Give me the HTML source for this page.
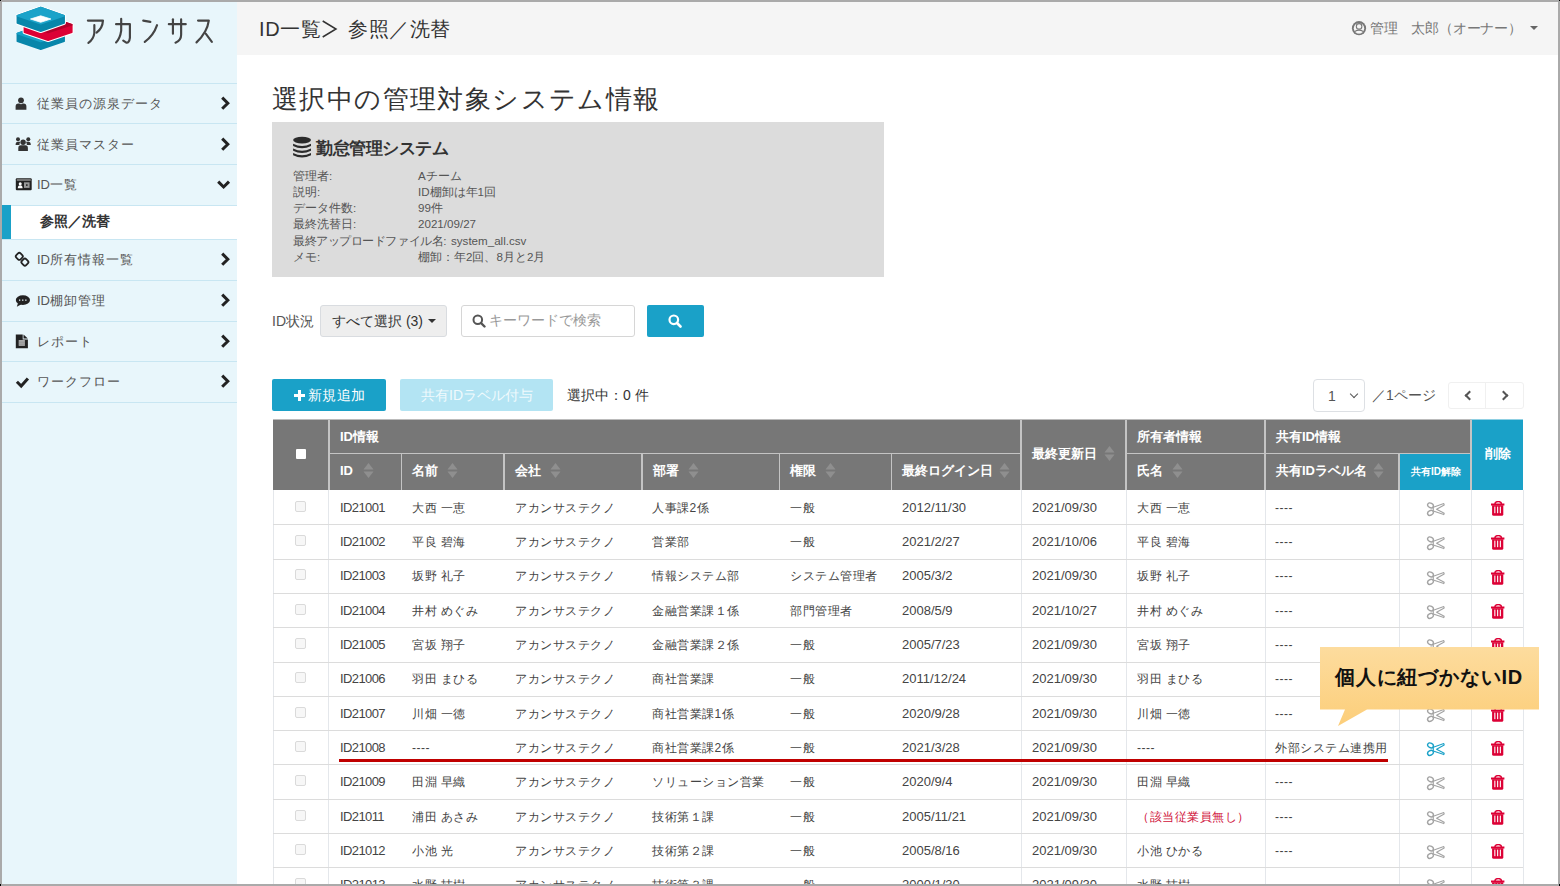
<!DOCTYPE html><html><head><meta charset="utf-8"><style>
*{box-sizing:border-box;margin:0;padding:0}
html,body{width:1560px;height:886px;overflow:hidden;background:#fff}
body{position:relative;font-family:"Liberation Sans", sans-serif;color:#555}
.a{position:absolute;white-space:nowrap}
.sb{left:2px;top:2px;width:235px;height:884px;background:#e8f6fb}
.hd{left:237px;top:2px;width:1321px;height:52.5px;background:#f5f5f5}
.mi{left:2px;width:235px;border-top:1px solid #c8e6f2}
.mt{font-size:13px;letter-spacing:1px;color:#555;line-height:16px}
.chev{width:8px;height:8px;border-right:2.6px solid #333;border-bottom:2.6px solid #333}
.box{left:272px;top:122px;width:612px;height:155px;background:#dcdcdc}
.it{font-size:11.6px;color:#555;line-height:14px}
.th{background:#777;color:#fff;font-weight:bold;font-size:13px}
.td{font-size:13px;color:#444;line-height:16px}
.hl{height:1px;background:#e0e0e0}
.vl{width:1px;background:#e6e9ee}
</style></head><body>
<div class="a sb"></div>
<div class="a hd"></div>
<svg class="a" style="left:12px;top:4px" width="66" height="50" viewBox="0 0 66 50"><path d="M28.75 21.6 L52.15 29.6 L52.15 37.2 L28.75 45.2 L5.350000000000001 37.2 L5.350000000000001 29.6 Z" fill="#0886aa" stroke="#e8f6fb" stroke-width="3.6" stroke-linejoin="round"/><path d="M28.75 21.6 L52.15 29.6 L52.15 37.2 L28.75 45.2 L5.350000000000001 37.2 L5.350000000000001 29.6 Z" fill="#0886aa" stroke="#0886aa" stroke-width="1.6" stroke-linejoin="round"/><path d="M28.75 21.6 L52.15 29.6 L28.75 37.6 L5.350000000000001 29.6 Z" fill="#17a0c6" stroke="#17a0c6" stroke-width="1.6" stroke-linejoin="round"/><path d="M36.1 12.8 L59.8 20.700000000000003 L59.8 28.300000000000004 L36.1 36.2 L12.400000000000002 28.300000000000004 L12.400000000000002 20.700000000000003 Z" fill="#dc0035" stroke="#ffffff" stroke-width="3.6" stroke-linejoin="round"/><path d="M36.1 12.8 L59.8 20.700000000000003 L59.8 28.300000000000004 L36.1 36.2 L12.400000000000002 28.300000000000004 L12.400000000000002 20.700000000000003 Z" fill="#dc0035" stroke="#dc0035" stroke-width="1.6" stroke-linejoin="round"/><path d="M36.1 12.8 L59.8 20.700000000000003 L36.1 28.6 L12.400000000000002 20.700000000000003 Z" fill="#b3002b" stroke="#b3002b" stroke-width="1.6" stroke-linejoin="round"/><path d="M28.75 3.6 L52.15 11.7 L52.15 19.1 L28.75 27.200000000000003 L5.350000000000001 19.1 L5.350000000000001 11.7 Z" fill="#0886aa" stroke="#ffffff" stroke-width="3.6" stroke-linejoin="round"/><path d="M28.75 3.6 L52.15 11.7 L52.15 19.1 L28.75 27.200000000000003 L5.350000000000001 19.1 L5.350000000000001 11.7 Z" fill="#0886aa" stroke="#0886aa" stroke-width="1.6" stroke-linejoin="round"/><path d="M28.75 3.6 L52.15 11.7 L28.75 19.8 L5.350000000000001 11.7 Z" fill="#1ba3c9" stroke="#1ba3c9" stroke-width="1.6" stroke-linejoin="round"/><path d="M18.5 15 L28.7 11.8 L38.9 15 L28.7 18.3 Z" fill="#ffffff" stroke="#fff" stroke-width="0.8" stroke-linejoin="round"/></svg>
<svg class="a" style="left:75px;top:5px" width="160" height="50" viewBox="0 0 1560 488"><g fill="none" stroke="#444" stroke-width="21" stroke-linecap="round" stroke-linejoin="round"><path d="M125 152 L272 152 Q268 225 210 270"/><path d="M188 195 L188 275 Q180 335 130 370"/><path d="M400 187 L535 187 L535 320 Q528 372 500 368 L470 348"/><path d="M450 135 L450 250 Q440 325 400 365"/><path d="M665 152 L735 165"/><path d="M800 197 Q765 300 680 360"/><path d="M915 187 L1080 187"/><path d="M955 140 L955 280"/><path d="M1035 140 L1035 290 Q1035 345 980 368"/><path d="M1200 152 L1305 152 Q1290 265 1185 365"/><path d="M1275 280 L1335 360"/></g></svg>
<div class="a" style="left:259px;top:17px;font-size:20px;letter-spacing:0.6px;line-height:24px;color:#333">ID一覧</div>
<svg class="a" style="left:320px;top:18px" width="20" height="22" viewBox="0 0 20 22"><path d="M2.7 3 L16 11 L2.7 19" fill="none" stroke="#333" stroke-width="1.5"/></svg>
<div class="a" style="left:348px;top:17px;font-size:20px;letter-spacing:0.6px;line-height:24px;color:#333">参照／洗替</div>
<svg class="a" style="left:1351px;top:20px" width="16" height="16" viewBox="0 0 16 16">
<defs><clipPath id="uc"><circle cx="8" cy="8.2" r="5.3"/></clipPath></defs>
<circle cx="8" cy="8.2" r="7.1" fill="#777"/>
<circle cx="8" cy="8.2" r="5.2" fill="#f5f5f5"/>
<g clip-path="url(#uc)"><ellipse cx="8" cy="14" rx="5.6" ry="4.6" fill="#777"/><ellipse cx="8" cy="14.4" rx="4.4" ry="3.6" fill="#f5f5f5"/></g>
<circle cx="8.1" cy="6.4" r="3.3" fill="#777"/>
<circle cx="8.1" cy="6.4" r="2.2" fill="#f5f5f5"/>
</svg>
<div class="a" style="left:1370px;top:20px;font-size:14px;letter-spacing:-0.2px;line-height:16px;color:#777">管理　太郎（オーナー）</div>
<div class="a" style="left:1530px;top:26px;width:0;height:0;border-left:4px solid transparent;border-right:4px solid transparent;border-top:4px solid #666"></div>
<div class="a mi" style="top:82.5px;height:40.5px"></div>
<div class="a mt" style="left:37px;top:95.8px">従業員の源泉データ</div>
<svg class="a" style="left:215px;top:92.8px" width="20" height="20" viewBox="0 0 20 20"><path d="M7.2 4.6 L12.8 10.2 L7.2 15.8" fill="none" stroke="#222" stroke-width="3"/></svg>
<div class="a mi" style="top:123px;height:41px"></div>
<div class="a mt" style="left:37px;top:136.6px">従業員マスター</div>
<svg class="a" style="left:215px;top:133.5px" width="20" height="20" viewBox="0 0 20 20"><path d="M7.2 4.6 L12.8 10.2 L7.2 15.8" fill="none" stroke="#222" stroke-width="3"/></svg>
<div class="a mi" style="top:164px;height:40.5px"></div>
<div class="a mt" style="left:37px;top:177.3px"><span style="letter-spacing:0">ID</span>一覧</div>
<svg class="a" style="left:213px;top:174.2px" width="20" height="20" viewBox="0 0 20 20"><path d="M5.2 7.6 L10.6 13 L16 7.6" fill="none" stroke="#222" stroke-width="3"/></svg>
<div class="a" style="left:2px;top:204.5px;width:235px;height:34.5px;background:#fff;border-top:1px solid #c8e6f2"></div>
<div class="a" style="left:2px;top:205px;width:9px;height:34px;background:#1aa1c8"></div>
<div class="a" style="left:40px;top:213px;font-size:14px;line-height:16px;font-weight:bold;color:#333">参照／洗替</div>
<div class="a mi" style="top:239px;height:40.5px"></div>
<div class="a mt" style="left:37px;top:252.3px"><span style="letter-spacing:0">ID</span>所有情報一覧</div>
<svg class="a" style="left:215px;top:249.2px" width="20" height="20" viewBox="0 0 20 20"><path d="M7.2 4.6 L12.8 10.2 L7.2 15.8" fill="none" stroke="#222" stroke-width="3"/></svg>
<div class="a mi" style="top:279.5px;height:41px"></div>
<div class="a mt" style="left:37px;top:293.1px"><span style="letter-spacing:0">ID</span>棚卸管理</div>
<svg class="a" style="left:215px;top:290.0px" width="20" height="20" viewBox="0 0 20 20"><path d="M7.2 4.6 L12.8 10.2 L7.2 15.8" fill="none" stroke="#222" stroke-width="3"/></svg>
<div class="a mi" style="top:320.5px;height:40.5px"></div>
<div class="a mt" style="left:37px;top:333.9px">レポート</div>
<svg class="a" style="left:215px;top:330.8px" width="20" height="20" viewBox="0 0 20 20"><path d="M7.2 4.6 L12.8 10.2 L7.2 15.8" fill="none" stroke="#222" stroke-width="3"/></svg>
<div class="a mi" style="top:361px;height:40.5px"></div>
<div class="a mt" style="left:37px;top:374.4px">ワークフロー</div>
<svg class="a" style="left:215px;top:371.2px" width="20" height="20" viewBox="0 0 20 20"><path d="M7.2 4.6 L12.8 10.2 L7.2 15.8" fill="none" stroke="#222" stroke-width="3"/></svg>
<div class="a mi" style="top:401.5px;height:1px"></div>
<svg class="a" style="left:0;top:0" width="40" height="400" viewBox="0 0 40 400"><circle cx="21" cy="100.3" r="2.9" fill="#333"/><path d="M15.6 109.7 L15.6 106.5 Q15.6 103.6 18.4 103.6 L19.5 103.6 Q21 104.8 22.5 103.6 L23.6 103.6 Q26.4 103.6 26.4 106.5 L26.4 109.7 Z" fill="#333"/><circle cx="18" cy="139.2" r="2" fill="#333"/><circle cx="28.3" cy="139.2" r="2" fill="#333"/><circle cx="23.1" cy="142.3" r="2.7" fill="#333"/><path d="M15.6 145 Q15.6 141.8 18 141.8 L20.3 141.8 Q19.3 143.5 19.5 145 Z M30.8 145 Q30.8 141.8 28.4 141.8 L26 141.8 Q27 143.5 26.8 145 Z" fill="#333"/><path d="M18.3 151 L18.3 148 Q18.3 145.3 20.8 145.3 L25.4 145.3 Q27.9 145.3 27.9 148 L27.9 151 Z" fill="#333"/><rect x="15.8" y="178.3" width="15.9" height="11.9" rx="1" fill="#222"/><rect x="16.8" y="179.2" width="13.9" height="1.6" fill="#888"/><path d="M17.8 188.2 Q17.8 185.3 20.2 185.3 Q22.6 185.3 22.6 188.2 Z" fill="#fff"/><circle cx="20.2" cy="183.8" r="1.5" fill="#fff"/><rect x="24" y="182.3" width="5.6" height="5.6" fill="#999"/><rect x="26" y="184.2" width="1.6" height="1.8" fill="#333"/><g fill="none" stroke="#222" stroke-width="1.8"><rect x="16.3" y="253.3" width="6" height="6" rx="1.8" transform="rotate(45 19.3 256.3)"/><rect x="21.9" y="259.1" width="6" height="6" rx="1.8" transform="rotate(45 24.9 262.1)"/></g><ellipse cx="22.9" cy="300.1" rx="7.1" ry="4.9" fill="#222"/><path d="M18 303 L16.8 306.8 L21.5 304.2 Z" fill="#222"/><rect x="19" y="299.5" width="1.3" height="1.3" fill="#e8f6fb"/><rect x="22.1" y="299.5" width="1.3" height="1.3" fill="#e8f6fb"/><rect x="25.2" y="299.5" width="1.3" height="1.3" fill="#e8f6fb"/><path d="M15.8 334.4 L22.7 334.4 L22.7 339.4 L27.9 339.4 L27.9 348.2 L15.8 348.2 Z" fill="#222"/><path d="M23.5 334.6 L27.8 338.6 L23.5 338.6 Z" fill="#222"/><rect x="18.7" y="340" width="6.2" height="5.9" fill="#aaa"/><rect x="18.7" y="341.8" width="6.2" height="0.6" fill="#888"/><rect x="18.7" y="343.8" width="6.2" height="0.6" fill="#888"/><path d="M16.9 381.7 L21.2 386 L27.9 378.6" fill="none" stroke="#222" stroke-width="3"/></svg>
<div class="a" style="left:272px;top:81.5px;font-size:26px;letter-spacing:1.4px;line-height:34px;color:#333">選択中の管理対象システム情報</div>
<div class="a box"></div>
<svg class="a" style="left:288px;top:132px" width="30" height="30" viewBox="0 0 30 30"><ellipse cx="14.05" cy="8.05" rx="8.95" ry="3.4" fill="#2b2b2b"/><path d="M5.1 11.7 Q14 16.299999999999997 23 11.7 L23 14.0 Q14 18.6 5.1 14.0 Z" fill="#2b2b2b"/><path d="M5.1 16.4 Q14 21.0 23 16.4 L23 18.7 Q14 23.299999999999997 5.1 18.7 Z" fill="#2b2b2b"/><path d="M5.1 21.0 Q14 25.6 23 21.0 L23 23.3 Q14 27.9 5.1 23.3 Z" fill="#2b2b2b"/></svg>
<div class="a" style="left:316px;top:138px;font-size:17px;letter-spacing:-0.5px;line-height:22px;font-weight:bold;color:#333">勤怠管理システム</div>
<div class="a it" style="left:293px;top:168.7px;">管理者:</div>
<div class="a it" style="left:418px;top:168.7px">Aチーム</div>
<div class="a it" style="left:293px;top:184.9px;">説明:</div>
<div class="a it" style="left:418px;top:184.9px">ID棚卸は年1回</div>
<div class="a it" style="left:293px;top:201.1px;">データ件数:</div>
<div class="a it" style="left:418px;top:201.1px">99件</div>
<div class="a it" style="left:293px;top:217.3px;">最終洗替日:</div>
<div class="a it" style="left:418px;top:217.3px">2021/09/27</div>
<div class="a it" style="left:293px;top:233.5px;letter-spacing:-0.45px;">最終アップロードファイル名:</div>
<div class="a it" style="left:451px;top:233.5px">system_all.csv</div>
<div class="a it" style="left:293px;top:249.7px;">メモ:</div>
<div class="a it" style="left:418px;top:249.7px">棚卸：年2回、8月と2月</div>
<div class="a" style="left:272px;top:313px;font-size:14px;line-height:16px;color:#555">ID状況</div>
<div class="a" style="left:320px;top:305px;width:127px;height:32px;background:#eeeeee;border:1px solid #d9dce0;border-radius:3px"></div>
<div class="a" style="left:332px;top:313px;font-size:14px;line-height:16px;color:#333">すべて選択 (3)</div>
<div class="a" style="left:428px;top:319px;width:0;height:0;border-left:4px solid transparent;border-right:4px solid transparent;border-top:4px solid #333"></div>
<div class="a" style="left:461px;top:305px;width:174px;height:32px;background:#fff;border:1px solid #d6d6d6;border-radius:3px"></div>
<svg class="a" style="left:472px;top:314px" width="14" height="14" viewBox="0 0 14 14"><circle cx="5.8" cy="5.8" r="4.3" fill="none" stroke="#555" stroke-width="2"/><path d="M9 9 L12.5 12.5" stroke="#555" stroke-width="2.4" stroke-linecap="round"/></svg>
<div class="a" style="left:489px;top:312px;font-size:14px;line-height:16px;color:#999">キーワードで検索</div>
<div class="a" style="left:647px;top:305px;width:57px;height:32px;background:#1aa1c8;border-radius:2px"></div>
<svg class="a" style="left:668px;top:314px" width="14" height="14" viewBox="0 0 14 14"><circle cx="5.8" cy="5.8" r="4.3" fill="none" stroke="#fff" stroke-width="2.2"/><path d="M9 9 L12.5 12.5" stroke="#fff" stroke-width="2.6" stroke-linecap="round"/></svg>
<div class="a" style="left:272px;top:379px;width:114px;height:32px;background:#1aa1c8;border-radius:2px"></div>
<svg class="a" style="left:294px;top:389.5px" width="11" height="11" viewBox="0 0 11 11"><path d="M5.5 0 L5.5 11 M0 5.5 L11 5.5" stroke="#fff" stroke-width="3"/></svg>
<div class="a" style="left:308px;top:387px;font-size:14px;letter-spacing:0.3px;line-height:16px;color:#fff">新規追加</div>
<div class="a" style="left:400px;top:379px;width:153px;height:32px;background:#b3e4f3;border-radius:2px"></div>
<div class="a" style="left:421px;top:387px;font-size:14px;line-height:16px;color:#f0fafd">共有IDラベル付与</div>
<div class="a" style="left:567px;top:387px;font-size:14px;line-height:16px;color:#333">選択中：0 件</div>
<div class="a" style="left:1313px;top:379px;width:51.5px;height:32.5px;background:#fff;border:1px solid #dde0e4;border-radius:4px"></div>
<div class="a" style="left:1328px;top:387.5px;font-size:14px;line-height:16px;color:#555">1</div>
<div class="a chev" style="left:1351px;top:391px;width:6px;height:6px;border-width:1.5px;border-color:#555;transform:rotate(45deg)"></div>
<div class="a" style="left:1372px;top:387px;font-size:14px;line-height:16px;color:#555">／1ページ</div>
<div class="a" style="left:1448px;top:382px;width:75.5px;height:26.5px;background:#fff;border:1px solid #f0f0f0;border-radius:3px"></div>
<div class="a" style="left:1485px;top:382px;width:1px;height:26.5px;background:#f0f0f0"></div>
<div class="a chev" style="left:1466px;top:392px;width:7px;height:7px;border-width:2px;border-color:#555;transform:rotate(135deg)"></div>
<div class="a chev" style="left:1500px;top:392px;width:7px;height:7px;border-width:2px;border-color:#555;transform:rotate(-45deg)"></div>
<div class="a" style="left:273px;top:419px;width:1198px;height:1px;background:#bbbbbb"></div>
<div class="a" style="left:1471px;top:419px;width:52px;height:1px;background:#8fd0e3"></div>
<div class="a" style="left:273px;top:420px;width:1250px;height:70px;background:#777"></div>
<div class="a" style="left:1399px;top:453.5px;width:124px;height:36.5px;background:#1aa1c8"></div>
<div class="a" style="left:1471px;top:420px;width:52px;height:70px;background:#1aa1c8"></div>
<div class="a" style="left:328px;top:420px;width:1.5px;height:70px;background:#c4c4c4"></div>
<div class="a" style="left:328.5px;top:452.75px;width:692.5px;height:1.5px;background:#c4c4c4"></div>
<div class="a" style="left:1126px;top:452.75px;width:345px;height:1.5px;background:#c4c4c4"></div>
<div class="a" style="left:400.75px;top:453.5px;width:1.5px;height:36.5px;background:#c4c4c4"></div>
<div class="a" style="left:503.25px;top:453.5px;width:1.5px;height:36.5px;background:#c4c4c4"></div>
<div class="a" style="left:641.25px;top:453.5px;width:1.5px;height:36.5px;background:#c4c4c4"></div>
<div class="a" style="left:778.75px;top:453.5px;width:1.5px;height:36.5px;background:#c4c4c4"></div>
<div class="a" style="left:890.75px;top:453.5px;width:1.5px;height:36.5px;background:#c4c4c4"></div>
<div class="a" style="left:1398.25px;top:453.5px;width:1.5px;height:36.5px;background:#c4c4c4"></div>
<div class="a" style="left:1020.25px;top:420px;width:1.5px;height:70px;background:#c4c4c4"></div>
<div class="a" style="left:1125.25px;top:420px;width:1.5px;height:70px;background:#c4c4c4"></div>
<div class="a" style="left:1264.25px;top:420px;width:1.5px;height:70px;background:#c4c4c4"></div>
<div class="a" style="left:1470.25px;top:420px;width:1.5px;height:70px;background:#c4c4c4"></div>
<div class="a" style="left:296px;top:449px;width:9.5px;height:9.5px;background:#fff;border-radius:1px"></div>
<div class="a th" style="left:340px;top:428.5px;font-size:13px;line-height:16px;background:none">ID情報</div>
<div class="a th" style="left:340px;top:463px;font-size:13px;line-height:16px;background:none">ID</div>
<svg class="a" style="left:363px;top:462.5px" width="11" height="15" viewBox="0 0 11 15"><path d="M5.5 0 L10.5 6.5 L0.5 6.5 Z M0.5 8.5 L10.5 8.5 L5.5 15 Z" fill="#8f8f8f"/></svg>
<div class="a th" style="left:412px;top:463px;font-size:13px;line-height:16px;background:none">名前</div>
<svg class="a" style="left:447px;top:462.5px" width="11" height="15" viewBox="0 0 11 15"><path d="M5.5 0 L10.5 6.5 L0.5 6.5 Z M0.5 8.5 L10.5 8.5 L5.5 15 Z" fill="#8f8f8f"/></svg>
<div class="a th" style="left:515px;top:463px;font-size:13px;line-height:16px;background:none">会社</div>
<svg class="a" style="left:550px;top:462.5px" width="11" height="15" viewBox="0 0 11 15"><path d="M5.5 0 L10.5 6.5 L0.5 6.5 Z M0.5 8.5 L10.5 8.5 L5.5 15 Z" fill="#8f8f8f"/></svg>
<div class="a th" style="left:653px;top:463px;font-size:13px;line-height:16px;background:none">部署</div>
<svg class="a" style="left:688px;top:462.5px" width="11" height="15" viewBox="0 0 11 15"><path d="M5.5 0 L10.5 6.5 L0.5 6.5 Z M0.5 8.5 L10.5 8.5 L5.5 15 Z" fill="#8f8f8f"/></svg>
<div class="a th" style="left:790px;top:463px;font-size:13px;line-height:16px;background:none">権限</div>
<svg class="a" style="left:825px;top:462.5px" width="11" height="15" viewBox="0 0 11 15"><path d="M5.5 0 L10.5 6.5 L0.5 6.5 Z M0.5 8.5 L10.5 8.5 L5.5 15 Z" fill="#8f8f8f"/></svg>
<div class="a th" style="left:902px;top:463px;font-size:13px;line-height:16px;background:none">最終ログイン日</div>
<svg class="a" style="left:999px;top:462.5px" width="11" height="15" viewBox="0 0 11 15"><path d="M5.5 0 L10.5 6.5 L0.5 6.5 Z M0.5 8.5 L10.5 8.5 L5.5 15 Z" fill="#8f8f8f"/></svg>
<div class="a th" style="left:1032px;top:446px;font-size:13px;line-height:16px;background:none">最終更新日</div>
<svg class="a" style="left:1104px;top:445.5px" width="11" height="15" viewBox="0 0 11 15"><path d="M5.5 0 L10.5 6.5 L0.5 6.5 Z M0.5 8.5 L10.5 8.5 L5.5 15 Z" fill="#8f8f8f"/></svg>
<div class="a th" style="left:1137px;top:428.5px;font-size:13px;line-height:16px;background:none">所有者情報</div>
<div class="a th" style="left:1137px;top:463px;font-size:13px;line-height:16px;background:none">氏名</div>
<svg class="a" style="left:1172px;top:462.5px" width="11" height="15" viewBox="0 0 11 15"><path d="M5.5 0 L10.5 6.5 L0.5 6.5 Z M0.5 8.5 L10.5 8.5 L5.5 15 Z" fill="#8f8f8f"/></svg>
<div class="a th" style="left:1276px;top:428.5px;font-size:13px;line-height:16px;background:none">共有ID情報</div>
<div class="a th" style="left:1276px;top:463px;font-size:13px;line-height:16px;background:none">共有IDラベル名</div>
<svg class="a" style="left:1373px;top:462.5px" width="11" height="15" viewBox="0 0 11 15"><path d="M5.5 0 L10.5 6.5 L0.5 6.5 Z M0.5 8.5 L10.5 8.5 L5.5 15 Z" fill="#8f8f8f"/></svg>
<div class="a th" style="left:1411px;top:466px;font-size:10px;line-height:12px;background:none">共有ID解除</div>
<div class="a th" style="left:1485px;top:446px;font-size:13px;line-height:16px;background:none">削除</div>
<div class="a" style="left:272.5px;top:490px;width:1.0px;height:396px;background:#e4e7eb"></div>
<div class="a" style="left:328.0px;top:490px;width:1.0px;height:396px;background:#e4e7eb"></div>
<div class="a" style="left:1020.5px;top:490px;width:1.0px;height:396px;background:#e4e7eb"></div>
<div class="a" style="left:1125.5px;top:490px;width:1.0px;height:396px;background:#e4e7eb"></div>
<div class="a" style="left:1264.5px;top:490px;width:1.0px;height:396px;background:#e4e7eb"></div>
<div class="a" style="left:1398.5px;top:490px;width:1.0px;height:396px;background:#e4e7eb"></div>
<div class="a" style="left:1470.5px;top:490px;width:1.0px;height:396px;background:#e4e7eb"></div>
<div class="a" style="left:1522.5px;top:490px;width:1.0px;height:396px;background:#e4e7eb"></div>
<div class="a" style="left:273px;top:524.3px;width:1250px;height:1.0px;background:#dcdcdc"></div>
<div class="a" style="left:295px;top:500.8px;width:11px;height:11.0px;background:#f7f7f7;border:1px solid #dadada;border-radius:2px"></div>
<div class="a td" style="left:340px;top:499.8px;letter-spacing:-0.6px;">ID21001</div>
<div class="a td" style="left:412px;top:499.8px;font-size:12px;letter-spacing:0.5px;">大西 一恵</div>
<div class="a td" style="left:515px;top:499.8px;font-size:12px;letter-spacing:0.5px;">アカンサステクノ</div>
<div class="a td" style="left:652px;top:499.8px;font-size:12px;letter-spacing:0.5px;">人事課2係</div>
<div class="a td" style="left:790px;top:499.8px;font-size:12px;letter-spacing:0.5px;">一般</div>
<div class="a td" style="left:902px;top:499.8px;">2012/11/30</div>
<div class="a td" style="left:1032px;top:499.8px;">2021/09/30</div>
<div class="a td" style="left:1137px;top:499.8px;font-size:12px;letter-spacing:0.5px;">大西 一恵</div>
<div class="a td" style="left:1275px;top:499.8px;font-size:12px;letter-spacing:0.5px;">----</div>
<svg class="a" style="left:1426px;top:502.0px" width="20" height="16" viewBox="0 0 20 16"><g fill="none" stroke="#a3a3a3" stroke-width="1.45" stroke-linejoin="round"><ellipse cx="4.5" cy="3.4" rx="3" ry="2.2" transform="rotate(28 4.5 3.4)"/><ellipse cx="4.5" cy="10.9" rx="3" ry="2.2" transform="rotate(-28 4.5 10.9)"/><path d="M7.3 5.2 L17.8 1.6 L18.2 2.9 L10.6 7.2 L18.2 11.3 L17.8 12.6 L7.3 9 Z" stroke-width="1.1"/></g></svg>
<svg class="a" style="left:1491px;top:501.0px" width="15" height="16" viewBox="0 0 15 16"><path d="M3.9 3 Q3.9 0.6 7.2 0.6 Q10.5 0.6 10.5 3" fill="none" stroke="#dc0035" stroke-width="1.5"/><rect x="0" y="2.5" width="13.4" height="2" fill="#dc0035"/><path d="M1.1 4.3 L12.3 4.3 L12.3 13.3 Q12.3 14.8 10.8 14.8 L2.6 14.8 Q1.1 14.8 1.1 13.3 Z" fill="#dc0035"/><rect x="3.3" y="5.6" width="1.1" height="6.6" fill="#fff"/><rect x="6.1" y="5.6" width="1.1" height="6.6" fill="#fff"/><rect x="8.8" y="5.6" width="1.1" height="6.6" fill="#fff"/></svg>
<div class="a" style="left:273px;top:558.5999999999999px;width:1250px;height:1.0px;background:#dcdcdc"></div>
<div class="a" style="left:295px;top:535.0999999999999px;width:11px;height:11.0px;background:#f7f7f7;border:1px solid #dadada;border-radius:2px"></div>
<div class="a td" style="left:340px;top:534.1px;letter-spacing:-0.6px;">ID21002</div>
<div class="a td" style="left:412px;top:534.1px;font-size:12px;letter-spacing:0.5px;">平良 碧海</div>
<div class="a td" style="left:515px;top:534.1px;font-size:12px;letter-spacing:0.5px;">アカンサステクノ</div>
<div class="a td" style="left:652px;top:534.1px;font-size:12px;letter-spacing:0.5px;">営業部</div>
<div class="a td" style="left:790px;top:534.1px;font-size:12px;letter-spacing:0.5px;">一般</div>
<div class="a td" style="left:902px;top:534.1px;">2021/2/27</div>
<div class="a td" style="left:1032px;top:534.1px;">2021/10/06</div>
<div class="a td" style="left:1137px;top:534.1px;font-size:12px;letter-spacing:0.5px;">平良 碧海</div>
<div class="a td" style="left:1275px;top:534.1px;font-size:12px;letter-spacing:0.5px;">----</div>
<svg class="a" style="left:1426px;top:536.3px" width="20" height="16" viewBox="0 0 20 16"><g fill="none" stroke="#a3a3a3" stroke-width="1.45" stroke-linejoin="round"><ellipse cx="4.5" cy="3.4" rx="3" ry="2.2" transform="rotate(28 4.5 3.4)"/><ellipse cx="4.5" cy="10.9" rx="3" ry="2.2" transform="rotate(-28 4.5 10.9)"/><path d="M7.3 5.2 L17.8 1.6 L18.2 2.9 L10.6 7.2 L18.2 11.3 L17.8 12.6 L7.3 9 Z" stroke-width="1.1"/></g></svg>
<svg class="a" style="left:1491px;top:535.3px" width="15" height="16" viewBox="0 0 15 16"><path d="M3.9 3 Q3.9 0.6 7.2 0.6 Q10.5 0.6 10.5 3" fill="none" stroke="#dc0035" stroke-width="1.5"/><rect x="0" y="2.5" width="13.4" height="2" fill="#dc0035"/><path d="M1.1 4.3 L12.3 4.3 L12.3 13.3 Q12.3 14.8 10.8 14.8 L2.6 14.8 Q1.1 14.8 1.1 13.3 Z" fill="#dc0035"/><rect x="3.3" y="5.6" width="1.1" height="6.6" fill="#fff"/><rect x="6.1" y="5.6" width="1.1" height="6.6" fill="#fff"/><rect x="8.8" y="5.6" width="1.1" height="6.6" fill="#fff"/></svg>
<div class="a" style="left:273px;top:592.9px;width:1250px;height:1.0px;background:#dcdcdc"></div>
<div class="a" style="left:295px;top:569.4px;width:11px;height:11.0px;background:#f7f7f7;border:1px solid #dadada;border-radius:2px"></div>
<div class="a td" style="left:340px;top:568.4px;letter-spacing:-0.6px;">ID21003</div>
<div class="a td" style="left:412px;top:568.4px;font-size:12px;letter-spacing:0.5px;">坂野 礼子</div>
<div class="a td" style="left:515px;top:568.4px;font-size:12px;letter-spacing:0.5px;">アカンサステクノ</div>
<div class="a td" style="left:652px;top:568.4px;font-size:12px;letter-spacing:0.5px;">情報システム部</div>
<div class="a td" style="left:790px;top:568.4px;font-size:12px;letter-spacing:0.5px;">システム管理者</div>
<div class="a td" style="left:902px;top:568.4px;">2005/3/2</div>
<div class="a td" style="left:1032px;top:568.4px;">2021/09/30</div>
<div class="a td" style="left:1137px;top:568.4px;font-size:12px;letter-spacing:0.5px;">坂野 礼子</div>
<div class="a td" style="left:1275px;top:568.4px;font-size:12px;letter-spacing:0.5px;">----</div>
<svg class="a" style="left:1426px;top:570.6px" width="20" height="16" viewBox="0 0 20 16"><g fill="none" stroke="#a3a3a3" stroke-width="1.45" stroke-linejoin="round"><ellipse cx="4.5" cy="3.4" rx="3" ry="2.2" transform="rotate(28 4.5 3.4)"/><ellipse cx="4.5" cy="10.9" rx="3" ry="2.2" transform="rotate(-28 4.5 10.9)"/><path d="M7.3 5.2 L17.8 1.6 L18.2 2.9 L10.6 7.2 L18.2 11.3 L17.8 12.6 L7.3 9 Z" stroke-width="1.1"/></g></svg>
<svg class="a" style="left:1491px;top:569.6px" width="15" height="16" viewBox="0 0 15 16"><path d="M3.9 3 Q3.9 0.6 7.2 0.6 Q10.5 0.6 10.5 3" fill="none" stroke="#dc0035" stroke-width="1.5"/><rect x="0" y="2.5" width="13.4" height="2" fill="#dc0035"/><path d="M1.1 4.3 L12.3 4.3 L12.3 13.3 Q12.3 14.8 10.8 14.8 L2.6 14.8 Q1.1 14.8 1.1 13.3 Z" fill="#dc0035"/><rect x="3.3" y="5.6" width="1.1" height="6.6" fill="#fff"/><rect x="6.1" y="5.6" width="1.1" height="6.6" fill="#fff"/><rect x="8.8" y="5.6" width="1.1" height="6.6" fill="#fff"/></svg>
<div class="a" style="left:273px;top:627.1999999999999px;width:1250px;height:1.0px;background:#dcdcdc"></div>
<div class="a" style="left:295px;top:603.6999999999999px;width:11px;height:11.0px;background:#f7f7f7;border:1px solid #dadada;border-radius:2px"></div>
<div class="a td" style="left:340px;top:602.7px;letter-spacing:-0.6px;">ID21004</div>
<div class="a td" style="left:412px;top:602.7px;font-size:12px;letter-spacing:0.5px;">井村 めぐみ</div>
<div class="a td" style="left:515px;top:602.7px;font-size:12px;letter-spacing:0.5px;">アカンサステクノ</div>
<div class="a td" style="left:652px;top:602.7px;font-size:12px;letter-spacing:0.5px;">金融営業課１係</div>
<div class="a td" style="left:790px;top:602.7px;font-size:12px;letter-spacing:0.5px;">部門管理者</div>
<div class="a td" style="left:902px;top:602.7px;">2008/5/9</div>
<div class="a td" style="left:1032px;top:602.7px;">2021/10/27</div>
<div class="a td" style="left:1137px;top:602.7px;font-size:12px;letter-spacing:0.5px;">井村 めぐみ</div>
<div class="a td" style="left:1275px;top:602.7px;font-size:12px;letter-spacing:0.5px;">----</div>
<svg class="a" style="left:1426px;top:604.9px" width="20" height="16" viewBox="0 0 20 16"><g fill="none" stroke="#a3a3a3" stroke-width="1.45" stroke-linejoin="round"><ellipse cx="4.5" cy="3.4" rx="3" ry="2.2" transform="rotate(28 4.5 3.4)"/><ellipse cx="4.5" cy="10.9" rx="3" ry="2.2" transform="rotate(-28 4.5 10.9)"/><path d="M7.3 5.2 L17.8 1.6 L18.2 2.9 L10.6 7.2 L18.2 11.3 L17.8 12.6 L7.3 9 Z" stroke-width="1.1"/></g></svg>
<svg class="a" style="left:1491px;top:603.9px" width="15" height="16" viewBox="0 0 15 16"><path d="M3.9 3 Q3.9 0.6 7.2 0.6 Q10.5 0.6 10.5 3" fill="none" stroke="#dc0035" stroke-width="1.5"/><rect x="0" y="2.5" width="13.4" height="2" fill="#dc0035"/><path d="M1.1 4.3 L12.3 4.3 L12.3 13.3 Q12.3 14.8 10.8 14.8 L2.6 14.8 Q1.1 14.8 1.1 13.3 Z" fill="#dc0035"/><rect x="3.3" y="5.6" width="1.1" height="6.6" fill="#fff"/><rect x="6.1" y="5.6" width="1.1" height="6.6" fill="#fff"/><rect x="8.8" y="5.6" width="1.1" height="6.6" fill="#fff"/></svg>
<div class="a" style="left:273px;top:661.5px;width:1250px;height:1.0px;background:#dcdcdc"></div>
<div class="a" style="left:295px;top:638.0px;width:11px;height:11.0px;background:#f7f7f7;border:1px solid #dadada;border-radius:2px"></div>
<div class="a td" style="left:340px;top:637.0px;letter-spacing:-0.6px;">ID21005</div>
<div class="a td" style="left:412px;top:637.0px;font-size:12px;letter-spacing:0.5px;">宮坂 翔子</div>
<div class="a td" style="left:515px;top:637.0px;font-size:12px;letter-spacing:0.5px;">アカンサステクノ</div>
<div class="a td" style="left:652px;top:637.0px;font-size:12px;letter-spacing:0.5px;">金融営業課２係</div>
<div class="a td" style="left:790px;top:637.0px;font-size:12px;letter-spacing:0.5px;">一般</div>
<div class="a td" style="left:902px;top:637.0px;">2005/7/23</div>
<div class="a td" style="left:1032px;top:637.0px;">2021/09/30</div>
<div class="a td" style="left:1137px;top:637.0px;font-size:12px;letter-spacing:0.5px;">宮坂 翔子</div>
<div class="a td" style="left:1275px;top:637.0px;font-size:12px;letter-spacing:0.5px;">----</div>
<svg class="a" style="left:1426px;top:639.2px" width="20" height="16" viewBox="0 0 20 16"><g fill="none" stroke="#a3a3a3" stroke-width="1.45" stroke-linejoin="round"><ellipse cx="4.5" cy="3.4" rx="3" ry="2.2" transform="rotate(28 4.5 3.4)"/><ellipse cx="4.5" cy="10.9" rx="3" ry="2.2" transform="rotate(-28 4.5 10.9)"/><path d="M7.3 5.2 L17.8 1.6 L18.2 2.9 L10.6 7.2 L18.2 11.3 L17.8 12.6 L7.3 9 Z" stroke-width="1.1"/></g></svg>
<svg class="a" style="left:1491px;top:638.2px" width="15" height="16" viewBox="0 0 15 16"><path d="M3.9 3 Q3.9 0.6 7.2 0.6 Q10.5 0.6 10.5 3" fill="none" stroke="#dc0035" stroke-width="1.5"/><rect x="0" y="2.5" width="13.4" height="2" fill="#dc0035"/><path d="M1.1 4.3 L12.3 4.3 L12.3 13.3 Q12.3 14.8 10.8 14.8 L2.6 14.8 Q1.1 14.8 1.1 13.3 Z" fill="#dc0035"/><rect x="3.3" y="5.6" width="1.1" height="6.6" fill="#fff"/><rect x="6.1" y="5.6" width="1.1" height="6.6" fill="#fff"/><rect x="8.8" y="5.6" width="1.1" height="6.6" fill="#fff"/></svg>
<div class="a" style="left:273px;top:695.8px;width:1250px;height:1.0px;background:#dcdcdc"></div>
<div class="a" style="left:295px;top:672.3px;width:11px;height:11.0px;background:#f7f7f7;border:1px solid #dadada;border-radius:2px"></div>
<div class="a td" style="left:340px;top:671.3px;letter-spacing:-0.6px;">ID21006</div>
<div class="a td" style="left:412px;top:671.3px;font-size:12px;letter-spacing:0.5px;">羽田 まひる</div>
<div class="a td" style="left:515px;top:671.3px;font-size:12px;letter-spacing:0.5px;">アカンサステクノ</div>
<div class="a td" style="left:652px;top:671.3px;font-size:12px;letter-spacing:0.5px;">商社営業課</div>
<div class="a td" style="left:790px;top:671.3px;font-size:12px;letter-spacing:0.5px;">一般</div>
<div class="a td" style="left:902px;top:671.3px;">2011/12/24</div>
<div class="a td" style="left:1032px;top:671.3px;">2021/09/30</div>
<div class="a td" style="left:1137px;top:671.3px;font-size:12px;letter-spacing:0.5px;">羽田 まひる</div>
<div class="a td" style="left:1275px;top:671.3px;font-size:12px;letter-spacing:0.5px;">----</div>
<svg class="a" style="left:1426px;top:673.5px" width="20" height="16" viewBox="0 0 20 16"><g fill="none" stroke="#a3a3a3" stroke-width="1.45" stroke-linejoin="round"><ellipse cx="4.5" cy="3.4" rx="3" ry="2.2" transform="rotate(28 4.5 3.4)"/><ellipse cx="4.5" cy="10.9" rx="3" ry="2.2" transform="rotate(-28 4.5 10.9)"/><path d="M7.3 5.2 L17.8 1.6 L18.2 2.9 L10.6 7.2 L18.2 11.3 L17.8 12.6 L7.3 9 Z" stroke-width="1.1"/></g></svg>
<svg class="a" style="left:1491px;top:672.5px" width="15" height="16" viewBox="0 0 15 16"><path d="M3.9 3 Q3.9 0.6 7.2 0.6 Q10.5 0.6 10.5 3" fill="none" stroke="#dc0035" stroke-width="1.5"/><rect x="0" y="2.5" width="13.4" height="2" fill="#dc0035"/><path d="M1.1 4.3 L12.3 4.3 L12.3 13.3 Q12.3 14.8 10.8 14.8 L2.6 14.8 Q1.1 14.8 1.1 13.3 Z" fill="#dc0035"/><rect x="3.3" y="5.6" width="1.1" height="6.6" fill="#fff"/><rect x="6.1" y="5.6" width="1.1" height="6.6" fill="#fff"/><rect x="8.8" y="5.6" width="1.1" height="6.6" fill="#fff"/></svg>
<div class="a" style="left:273px;top:730.0999999999999px;width:1250px;height:1.0px;background:#dcdcdc"></div>
<div class="a" style="left:295px;top:706.5999999999999px;width:11px;height:11.0px;background:#f7f7f7;border:1px solid #dadada;border-radius:2px"></div>
<div class="a td" style="left:340px;top:705.6px;letter-spacing:-0.6px;">ID21007</div>
<div class="a td" style="left:412px;top:705.6px;font-size:12px;letter-spacing:0.5px;">川畑 一徳</div>
<div class="a td" style="left:515px;top:705.6px;font-size:12px;letter-spacing:0.5px;">アカンサステクノ</div>
<div class="a td" style="left:652px;top:705.6px;font-size:12px;letter-spacing:0.5px;">商社営業課1係</div>
<div class="a td" style="left:790px;top:705.6px;font-size:12px;letter-spacing:0.5px;">一般</div>
<div class="a td" style="left:902px;top:705.6px;">2020/9/28</div>
<div class="a td" style="left:1032px;top:705.6px;">2021/09/30</div>
<div class="a td" style="left:1137px;top:705.6px;font-size:12px;letter-spacing:0.5px;">川畑 一徳</div>
<div class="a td" style="left:1275px;top:705.6px;font-size:12px;letter-spacing:0.5px;">----</div>
<svg class="a" style="left:1426px;top:707.8px" width="20" height="16" viewBox="0 0 20 16"><g fill="none" stroke="#a3a3a3" stroke-width="1.45" stroke-linejoin="round"><ellipse cx="4.5" cy="3.4" rx="3" ry="2.2" transform="rotate(28 4.5 3.4)"/><ellipse cx="4.5" cy="10.9" rx="3" ry="2.2" transform="rotate(-28 4.5 10.9)"/><path d="M7.3 5.2 L17.8 1.6 L18.2 2.9 L10.6 7.2 L18.2 11.3 L17.8 12.6 L7.3 9 Z" stroke-width="1.1"/></g></svg>
<svg class="a" style="left:1491px;top:706.8px" width="15" height="16" viewBox="0 0 15 16"><path d="M3.9 3 Q3.9 0.6 7.2 0.6 Q10.5 0.6 10.5 3" fill="none" stroke="#dc0035" stroke-width="1.5"/><rect x="0" y="2.5" width="13.4" height="2" fill="#dc0035"/><path d="M1.1 4.3 L12.3 4.3 L12.3 13.3 Q12.3 14.8 10.8 14.8 L2.6 14.8 Q1.1 14.8 1.1 13.3 Z" fill="#dc0035"/><rect x="3.3" y="5.6" width="1.1" height="6.6" fill="#fff"/><rect x="6.1" y="5.6" width="1.1" height="6.6" fill="#fff"/><rect x="8.8" y="5.6" width="1.1" height="6.6" fill="#fff"/></svg>
<div class="a" style="left:273px;top:764.3999999999999px;width:1250px;height:1.0px;background:#dcdcdc"></div>
<div class="a" style="left:295px;top:740.8999999999999px;width:11px;height:11.0px;background:#f7f7f7;border:1px solid #dadada;border-radius:2px"></div>
<div class="a td" style="left:340px;top:739.9px;letter-spacing:-0.6px;">ID21008</div>
<div class="a td" style="left:412px;top:739.9px;font-size:12px;letter-spacing:0.5px;">----</div>
<div class="a td" style="left:515px;top:739.9px;font-size:12px;letter-spacing:0.5px;">アカンサステクノ</div>
<div class="a td" style="left:652px;top:739.9px;font-size:12px;letter-spacing:0.5px;">商社営業課2係</div>
<div class="a td" style="left:790px;top:739.9px;font-size:12px;letter-spacing:0.5px;">一般</div>
<div class="a td" style="left:902px;top:739.9px;">2021/3/28</div>
<div class="a td" style="left:1032px;top:739.9px;">2021/09/30</div>
<div class="a td" style="left:1137px;top:739.9px;font-size:12px;letter-spacing:0.5px;">----</div>
<div class="a td" style="left:1275px;top:739.9px;font-size:12px;letter-spacing:0.5px;">外部システム連携用</div>
<svg class="a" style="left:1426px;top:742.1px" width="20" height="16" viewBox="0 0 20 16"><g fill="none" stroke="#1aa1c8" stroke-width="1.45" stroke-linejoin="round"><ellipse cx="4.5" cy="3.4" rx="3" ry="2.2" transform="rotate(28 4.5 3.4)"/><ellipse cx="4.5" cy="10.9" rx="3" ry="2.2" transform="rotate(-28 4.5 10.9)"/><path d="M7.3 5.2 L17.8 1.6 L18.2 2.9 L10.6 7.2 L18.2 11.3 L17.8 12.6 L7.3 9 Z" stroke-width="1.1"/></g></svg>
<svg class="a" style="left:1491px;top:741.1px" width="15" height="16" viewBox="0 0 15 16"><path d="M3.9 3 Q3.9 0.6 7.2 0.6 Q10.5 0.6 10.5 3" fill="none" stroke="#dc0035" stroke-width="1.5"/><rect x="0" y="2.5" width="13.4" height="2" fill="#dc0035"/><path d="M1.1 4.3 L12.3 4.3 L12.3 13.3 Q12.3 14.8 10.8 14.8 L2.6 14.8 Q1.1 14.8 1.1 13.3 Z" fill="#dc0035"/><rect x="3.3" y="5.6" width="1.1" height="6.6" fill="#fff"/><rect x="6.1" y="5.6" width="1.1" height="6.6" fill="#fff"/><rect x="8.8" y="5.6" width="1.1" height="6.6" fill="#fff"/></svg>
<div class="a" style="left:273px;top:798.6999999999999px;width:1250px;height:1.0px;background:#dcdcdc"></div>
<div class="a" style="left:295px;top:775.1999999999999px;width:11px;height:11.0px;background:#f7f7f7;border:1px solid #dadada;border-radius:2px"></div>
<div class="a td" style="left:340px;top:774.2px;letter-spacing:-0.6px;">ID21009</div>
<div class="a td" style="left:412px;top:774.2px;font-size:12px;letter-spacing:0.5px;">田淵 早織</div>
<div class="a td" style="left:515px;top:774.2px;font-size:12px;letter-spacing:0.5px;">アカンサステクノ</div>
<div class="a td" style="left:652px;top:774.2px;font-size:12px;letter-spacing:0.5px;">ソリューション営業</div>
<div class="a td" style="left:790px;top:774.2px;font-size:12px;letter-spacing:0.5px;">一般</div>
<div class="a td" style="left:902px;top:774.2px;">2020/9/4</div>
<div class="a td" style="left:1032px;top:774.2px;">2021/09/30</div>
<div class="a td" style="left:1137px;top:774.2px;font-size:12px;letter-spacing:0.5px;">田淵 早織</div>
<div class="a td" style="left:1275px;top:774.2px;font-size:12px;letter-spacing:0.5px;">----</div>
<svg class="a" style="left:1426px;top:776.4px" width="20" height="16" viewBox="0 0 20 16"><g fill="none" stroke="#a3a3a3" stroke-width="1.45" stroke-linejoin="round"><ellipse cx="4.5" cy="3.4" rx="3" ry="2.2" transform="rotate(28 4.5 3.4)"/><ellipse cx="4.5" cy="10.9" rx="3" ry="2.2" transform="rotate(-28 4.5 10.9)"/><path d="M7.3 5.2 L17.8 1.6 L18.2 2.9 L10.6 7.2 L18.2 11.3 L17.8 12.6 L7.3 9 Z" stroke-width="1.1"/></g></svg>
<svg class="a" style="left:1491px;top:775.4px" width="15" height="16" viewBox="0 0 15 16"><path d="M3.9 3 Q3.9 0.6 7.2 0.6 Q10.5 0.6 10.5 3" fill="none" stroke="#dc0035" stroke-width="1.5"/><rect x="0" y="2.5" width="13.4" height="2" fill="#dc0035"/><path d="M1.1 4.3 L12.3 4.3 L12.3 13.3 Q12.3 14.8 10.8 14.8 L2.6 14.8 Q1.1 14.8 1.1 13.3 Z" fill="#dc0035"/><rect x="3.3" y="5.6" width="1.1" height="6.6" fill="#fff"/><rect x="6.1" y="5.6" width="1.1" height="6.6" fill="#fff"/><rect x="8.8" y="5.6" width="1.1" height="6.6" fill="#fff"/></svg>
<div class="a" style="left:273px;top:833.0px;width:1250px;height:1.0px;background:#dcdcdc"></div>
<div class="a" style="left:295px;top:809.5px;width:11px;height:11.0px;background:#f7f7f7;border:1px solid #dadada;border-radius:2px"></div>
<div class="a td" style="left:340px;top:808.5px;letter-spacing:-0.6px;">ID21011</div>
<div class="a td" style="left:412px;top:808.5px;font-size:12px;letter-spacing:0.5px;">浦田 あさみ</div>
<div class="a td" style="left:515px;top:808.5px;font-size:12px;letter-spacing:0.5px;">アカンサステクノ</div>
<div class="a td" style="left:652px;top:808.5px;font-size:12px;letter-spacing:0.5px;">技術第１課</div>
<div class="a td" style="left:790px;top:808.5px;font-size:12px;letter-spacing:0.5px;">一般</div>
<div class="a td" style="left:902px;top:808.5px;">2005/11/21</div>
<div class="a td" style="left:1032px;top:808.5px;">2021/09/30</div>
<div class="a td" style="left:1137px;top:808.5px;font-size:12px;letter-spacing:0.5px;"><span style="color:#d0103a">（該当従業員無し）</span></div>
<div class="a td" style="left:1275px;top:808.5px;font-size:12px;letter-spacing:0.5px;">----</div>
<svg class="a" style="left:1426px;top:810.7px" width="20" height="16" viewBox="0 0 20 16"><g fill="none" stroke="#a3a3a3" stroke-width="1.45" stroke-linejoin="round"><ellipse cx="4.5" cy="3.4" rx="3" ry="2.2" transform="rotate(28 4.5 3.4)"/><ellipse cx="4.5" cy="10.9" rx="3" ry="2.2" transform="rotate(-28 4.5 10.9)"/><path d="M7.3 5.2 L17.8 1.6 L18.2 2.9 L10.6 7.2 L18.2 11.3 L17.8 12.6 L7.3 9 Z" stroke-width="1.1"/></g></svg>
<svg class="a" style="left:1491px;top:809.7px" width="15" height="16" viewBox="0 0 15 16"><path d="M3.9 3 Q3.9 0.6 7.2 0.6 Q10.5 0.6 10.5 3" fill="none" stroke="#dc0035" stroke-width="1.5"/><rect x="0" y="2.5" width="13.4" height="2" fill="#dc0035"/><path d="M1.1 4.3 L12.3 4.3 L12.3 13.3 Q12.3 14.8 10.8 14.8 L2.6 14.8 Q1.1 14.8 1.1 13.3 Z" fill="#dc0035"/><rect x="3.3" y="5.6" width="1.1" height="6.6" fill="#fff"/><rect x="6.1" y="5.6" width="1.1" height="6.6" fill="#fff"/><rect x="8.8" y="5.6" width="1.1" height="6.6" fill="#fff"/></svg>
<div class="a" style="left:273px;top:867.3px;width:1250px;height:1.0px;background:#dcdcdc"></div>
<div class="a" style="left:295px;top:843.8px;width:11px;height:11.0px;background:#f7f7f7;border:1px solid #dadada;border-radius:2px"></div>
<div class="a td" style="left:340px;top:842.8px;letter-spacing:-0.6px;">ID21012</div>
<div class="a td" style="left:412px;top:842.8px;font-size:12px;letter-spacing:0.5px;">小池 光</div>
<div class="a td" style="left:515px;top:842.8px;font-size:12px;letter-spacing:0.5px;">アカンサステクノ</div>
<div class="a td" style="left:652px;top:842.8px;font-size:12px;letter-spacing:0.5px;">技術第２課</div>
<div class="a td" style="left:790px;top:842.8px;font-size:12px;letter-spacing:0.5px;">一般</div>
<div class="a td" style="left:902px;top:842.8px;">2005/8/16</div>
<div class="a td" style="left:1032px;top:842.8px;">2021/09/30</div>
<div class="a td" style="left:1137px;top:842.8px;font-size:12px;letter-spacing:0.5px;">小池 ひかる</div>
<div class="a td" style="left:1275px;top:842.8px;font-size:12px;letter-spacing:0.5px;">----</div>
<svg class="a" style="left:1426px;top:845.0px" width="20" height="16" viewBox="0 0 20 16"><g fill="none" stroke="#a3a3a3" stroke-width="1.45" stroke-linejoin="round"><ellipse cx="4.5" cy="3.4" rx="3" ry="2.2" transform="rotate(28 4.5 3.4)"/><ellipse cx="4.5" cy="10.9" rx="3" ry="2.2" transform="rotate(-28 4.5 10.9)"/><path d="M7.3 5.2 L17.8 1.6 L18.2 2.9 L10.6 7.2 L18.2 11.3 L17.8 12.6 L7.3 9 Z" stroke-width="1.1"/></g></svg>
<svg class="a" style="left:1491px;top:844.0px" width="15" height="16" viewBox="0 0 15 16"><path d="M3.9 3 Q3.9 0.6 7.2 0.6 Q10.5 0.6 10.5 3" fill="none" stroke="#dc0035" stroke-width="1.5"/><rect x="0" y="2.5" width="13.4" height="2" fill="#dc0035"/><path d="M1.1 4.3 L12.3 4.3 L12.3 13.3 Q12.3 14.8 10.8 14.8 L2.6 14.8 Q1.1 14.8 1.1 13.3 Z" fill="#dc0035"/><rect x="3.3" y="5.6" width="1.1" height="6.6" fill="#fff"/><rect x="6.1" y="5.6" width="1.1" height="6.6" fill="#fff"/><rect x="8.8" y="5.6" width="1.1" height="6.6" fill="#fff"/></svg>
<div class="a" style="left:273px;top:901.5999999999999px;width:1250px;height:1.0px;background:#dcdcdc"></div>
<div class="a" style="left:295px;top:878.0999999999999px;width:11px;height:11.0px;background:#f7f7f7;border:1px solid #dadada;border-radius:2px"></div>
<div class="a td" style="left:340px;top:877.1px;letter-spacing:-0.6px;">ID21013</div>
<div class="a td" style="left:412px;top:877.1px;font-size:12px;letter-spacing:0.5px;">水野 技樹</div>
<div class="a td" style="left:515px;top:877.1px;font-size:12px;letter-spacing:0.5px;">アカンサステクノ</div>
<div class="a td" style="left:652px;top:877.1px;font-size:12px;letter-spacing:0.5px;">技術第３課</div>
<div class="a td" style="left:790px;top:877.1px;font-size:12px;letter-spacing:0.5px;">一般</div>
<div class="a td" style="left:902px;top:877.1px;">2000/1/30</div>
<div class="a td" style="left:1032px;top:877.1px;">2021/09/30</div>
<div class="a td" style="left:1137px;top:877.1px;font-size:12px;letter-spacing:0.5px;">水野 技樹</div>
<div class="a td" style="left:1275px;top:877.1px;font-size:12px;letter-spacing:0.5px;">----</div>
<svg class="a" style="left:1426px;top:879.3px" width="20" height="16" viewBox="0 0 20 16"><g fill="none" stroke="#a3a3a3" stroke-width="1.45" stroke-linejoin="round"><ellipse cx="4.5" cy="3.4" rx="3" ry="2.2" transform="rotate(28 4.5 3.4)"/><ellipse cx="4.5" cy="10.9" rx="3" ry="2.2" transform="rotate(-28 4.5 10.9)"/><path d="M7.3 5.2 L17.8 1.6 L18.2 2.9 L10.6 7.2 L18.2 11.3 L17.8 12.6 L7.3 9 Z" stroke-width="1.1"/></g></svg>
<svg class="a" style="left:1491px;top:878.3px" width="15" height="16" viewBox="0 0 15 16"><path d="M3.9 3 Q3.9 0.6 7.2 0.6 Q10.5 0.6 10.5 3" fill="none" stroke="#dc0035" stroke-width="1.5"/><rect x="0" y="2.5" width="13.4" height="2" fill="#dc0035"/><path d="M1.1 4.3 L12.3 4.3 L12.3 13.3 Q12.3 14.8 10.8 14.8 L2.6 14.8 Q1.1 14.8 1.1 13.3 Z" fill="#dc0035"/><rect x="3.3" y="5.6" width="1.1" height="6.6" fill="#fff"/><rect x="6.1" y="5.6" width="1.1" height="6.6" fill="#fff"/><rect x="8.8" y="5.6" width="1.1" height="6.6" fill="#fff"/></svg>
<div class="a" style="left:339px;top:759px;width:1049px;height:3px;background:#c00000"></div>
<svg class="a" style="left:1320px;top:647px" width="220" height="80" viewBox="0 0 220 80">
<defs><linearGradient id="g" x1="0" y1="0" x2="0" y2="1"><stop offset="0" stop-color="#fddc9e"/><stop offset="1" stop-color="#fcce7a"/></linearGradient></defs>
<path d="M0 0 L219 0 L219 62.5 L47 62.5 L18 79 L25 62.5 L0 62.5 Z" fill="url(#g)"/></svg>
<div class="a" style="left:1335px;top:664px;font-size:20px;letter-spacing:0.8px;line-height:26px;font-weight:bold;color:#111">個人に紐づかないID</div>
<div class="a" style="left:0px;top:0px;width:1560px;height:2px;background:#aaaaaa"></div>
<div class="a" style="left:0px;top:0px;width:2px;height:886px;background:#aaaaaa"></div>
<div class="a" style="left:1558px;top:0px;width:2px;height:886px;background:#aaaaaa"></div>
<div class="a" style="left:0px;top:884px;width:1560px;height:2px;background:#aaaaaa"></div>
<div class="a" style="left:0px;top:884px;width:1px;height:2px;background:#000"></div>
<div class="a" style="left:1559px;top:884px;width:1px;height:2px;background:#000"></div>
<div class="a" style="left:0px;top:0px;width:1px;height:1px;background:#000"></div>
<div class="a" style="left:1559px;top:0px;width:1px;height:1px;background:#000"></div>
</body></html>
